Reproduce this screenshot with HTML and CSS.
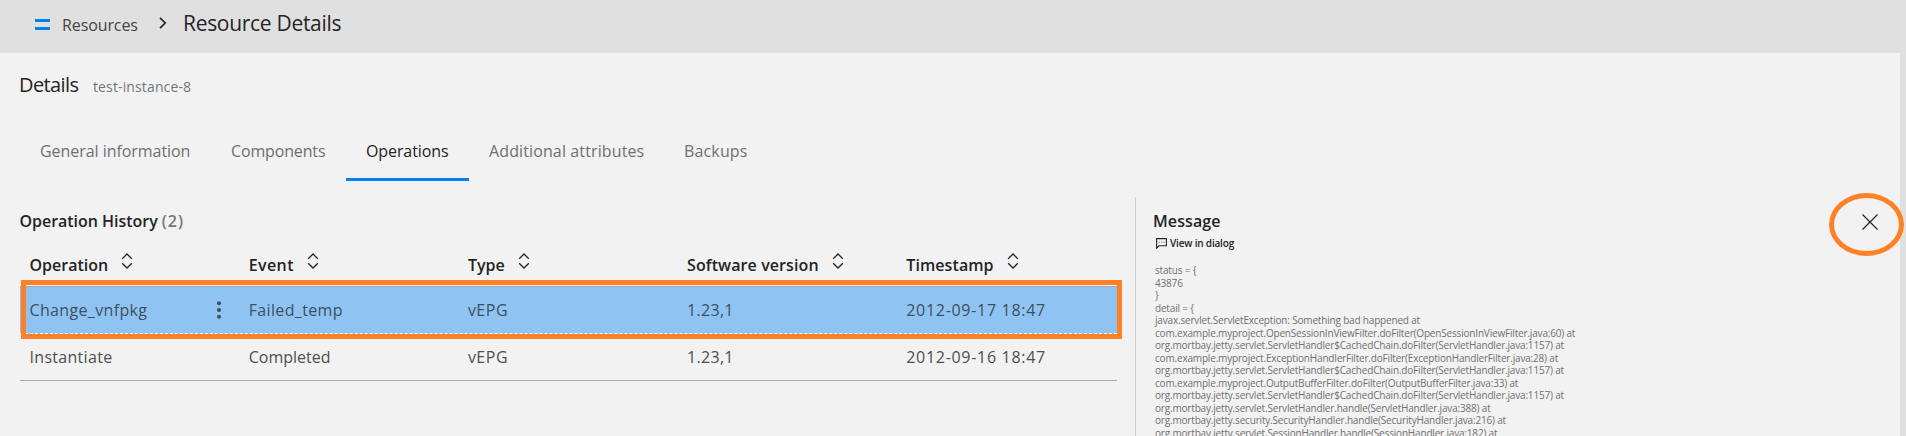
FILE: index.html
```
<!DOCTYPE html>
<html lang="en">
<head>
<meta charset="utf-8">
<title>Resource Details</title>
<link rel="stylesheet" href="styles.css">
</head>
<body>
<svg class="defs" aria-hidden="true">
  <symbol id="sort" viewBox="0 0 12 16"><path d="M1.2 5.8 6 1l4.8 4.8M1.2 10.2 6 15l4.8-4.8"/></symbol>
</svg>
<header class="bar">
  <span class="menu"></span>
  <a class="crumb">Resources</a>
  <svg class="chevron" viewBox="0 0 8 12"><path d="M1 .8 6.2 6 1 11.2"/></svg>
  <h1 class="title">Resource Details</h1>
</header>
<main class="page">
  <div class="heading"><h2 class="details">Details</h2><span class="instance">test-instance-8</span></div>
  <nav class="tabs">
    <a class="tab general">General information</a>
    <a class="tab components">Components</a>
    <a class="tab active">Operations</a>
    <a class="tab additional">Additional attributes</a>
    <a class="tab backups">Backups</a>
  </nav>
  <div class="content">
    <section class="history">
      <h3 class="section-title">Operation History <span class="count">(2)</span></h3>
      <div class="row head">
        <div class="cell">Operation<svg class="sort"><use href="#sort"/></svg></div>
        <div class="cell event">Event<svg class="sort"><use href="#sort"/></svg></div>
        <div class="cell">Type<svg class="sort"><use href="#sort"/></svg></div>
        <div class="cell software">Software version<svg class="sort"><use href="#sort"/></svg></div>
        <div class="cell software">Timestamp<svg class="sort"><use href="#sort"/></svg></div>
      </div>
      <div class="row selected">
        <div class="cell operation"><span class="change">Change_vnfpkg</span><svg class="kebab" viewBox="0 0 4 18"><circle cx="2" cy="2.2" r="2"/><circle cx="2" cy="9" r="2"/><circle cx="2" cy="15.8" r="2"/></svg></div>
        <div class="cell failed">Failed_temp</div>
        <div class="cell type">vEPG</div>
        <div class="cell version">1.23,1</div>
        <div class="cell time">2012-09-17 18:47</div>
        <span class="row-mark"></span>
      </div>
      <div class="row last">
        <div class="cell instantiate">Instantiate</div>
        <div class="cell">Completed</div>
        <div class="cell type">vEPG</div>
        <div class="cell version">1.23,1</div>
        <div class="cell time">2012-09-16 18:47</div>
      </div>
    </section>
    <aside class="message">
      <div class="message-head">
        <h3 class="section-title message-title">Message</h3>
        <span class="close"><svg class="cross" viewBox="0 0 16 16"><path d="M.5.5l15 15M15.5.5l-15 15"/></svg><span class="close-mark"></span></span>
      </div>
      <div class="dialog-link">
        <svg class="bubble" viewBox="0 0 11 11"><path d="M.6 10.2V.6h9.8v7.2H3z"/><path class="dots" d="M2.5 4.2h1.2M5 4.2h1.2M7.4 4.2h1.2"/></svg>
        <span>View in dialog</span>
      </div>
      <pre class="trace">status = {
43876
}
detail = {
javax.servlet.ServletException: Something bad happened at
com.example.myproject.OpenSessionInViewFilter.doFilter(OpenSessionInViewFilter.java:60) at
org.mortbay.jetty.servlet.ServletHandler$CachedChain.doFilter(ServletHandler.java:1157) at
com.example.myproject.ExceptionHandlerFilter.doFilter(ExceptionHandlerFilter.java:28) at
org.mortbay.jetty.servlet.ServletHandler$CachedChain.doFilter(ServletHandler.java:1157) at
com.example.myproject.OutputBufferFilter.doFilter(OutputBufferFilter.java:33) at
org.mortbay.jetty.servlet.ServletHandler$CachedChain.doFilter(ServletHandler.java:1157) at
org.mortbay.jetty.servlet.ServletHandler.handle(ServletHandler.java:388) at
org.mortbay.jetty.security.SecurityHandler.handle(SecurityHandler.java:216) at
org.mortbay.jetty.servlet.SessionHandler.handle(SessionHandler.java:182) at</pre>
    </aside>
  </div>
</main>
</body>
</html>
```
FILE: styles.css
```
* { box-sizing: border-box; }
body {
  margin: 0;
  height: 436px;
  overflow: hidden;
  display: flex;
  flex-direction: column;
  background: #e0e0e0;
  color: #242424;
  font: 400 16px/24px "Open Sans", "Noto Sans", sans-serif;
}
h1, h2, h3, pre { margin: 0; font: inherit; }
svg { fill: none; stroke: #242424; flex: none; }
.defs { position: absolute; width: 0; height: 0; }

.bar { height: 53px; flex: none; display: flex; align-items: flex-start; padding-left: 35px; }
.menu { width: 15px; height: 11px; margin: 19px 12px 0 0; border: solid #0082f0; border-width: 3px 0; }
.crumb { width: 75px; margin-top: 13px; letter-spacing: -0.1px; color: #444; }
.chevron { width: 8px; height: 12px; margin: 17px 0 0 22px; stroke-width: 1.7; }
.title { margin: 11px 0 0 16px; font-size: 21px; letter-spacing: -0.3px; white-space: nowrap; }

.page { flex: 1; min-height: 0; margin-right: 6px; background: #f2f2f2; display: flex; flex-direction: column; }
.heading { display: flex; align-items: baseline; height: 72px; padding: 20px 0 0 19px; }
.details { width: 60px; font-size: 20px; letter-spacing: -0.6px; }
.instance { margin-left: 14px; font-size: 14px; letter-spacing: 0.13px; color: #767676; }

.tabs { display: flex; height: 56px; padding-left: 20px; color: #6f6f6f; white-space: nowrap; }
.tab { height: 56px; padding: 14px 20px 0; }
.general { width: 191px; letter-spacing: -0.05px; }
.components { width: 135px; letter-spacing: -0.15px; }
.active { width: 123px; letter-spacing: -0.1px; color: #242424; border-bottom: 3px solid #0082f0; }
.additional { width: 195px; letter-spacing: 0.12px; }
.backups { letter-spacing: 0.15px; }

.content { flex: 1; min-height: 0; display: flex; }
.history { width: 1097px; margin: 28px 18px 0 20px; flex: none; }
.section-title { margin-left: -0.5px; font-weight: 600; letter-spacing: -0.03px; }
.count { color: #767676; letter-spacing: 1px; }
.row { position: relative; display: grid; grid-template-columns: repeat(5, 219.2px); line-height: 46px; color: #4f4f4f; }
.cell { padding-left: 9.5px; display: flex; white-space: nowrap; }
.head { height: 53px; padding-top: 20px; line-height: 24px; font-weight: 600; color: #242424; }
.sort { width: 12px; height: 16px; margin: 0 0 0 13px; stroke-width: 1.3; }
.event { letter-spacing: 0.4px; }
.software { letter-spacing: 0.09px; }
.selected { height: 48px; border-top: 1px solid #a8a8a8; border-bottom: 1px dashed #f2f2f2; background: #8fc4f2; color: #3d4f5f; }
.operation { justify-content: space-between; padding-right: 18px; }
.change { letter-spacing: 0.35px; }
.failed { letter-spacing: 0.35px; }
.instantiate { letter-spacing: 0.3px; }
.type { letter-spacing: 0.5px; }
.kebab { width: 4px; height: 18px; margin-top: 14px; fill: #3d4f5f; stroke: none; }
.version { letter-spacing: 0.3px; }
.time { letter-spacing: 0.7px; }
.row-mark { position: absolute; left: 1px; top: -7px; width: 1101px; height: 59px; border: 5px solid #ff8127; }
.last { height: 47px; border-bottom: 1px solid #a8a8a8; }

.message { flex: 1; min-width: 0; margin-top: 16px; padding: 12px 22px 0 17px; border-left: 1px solid #cfcfcf; }
.message-head { display: flex; justify-content: space-between; height: 24px; }
.message-title { margin-left: 0; letter-spacing: 0.1px; }
.close { position: relative; width: 16px; height: 16px; margin-top: 5px; }
.cross { display: block; width: 16px; height: 16px; stroke-width: 1.2; }
.close-mark { position: absolute; left: -33px; top: -21px; width: 75px; height: 63px; border: 5px solid #ff8127; border-radius: 50%; }
.dialog-link { display: flex; gap: 3px; margin: 3px 0 0 3px; font-size: 10px; line-height: 14px; font-weight: 600; letter-spacing: -0.18px; }
.bubble { width: 11px; height: 11px; margin-top: 2px; stroke-width: 1.1; }
.dots { stroke-width: 0.9; stroke: #666; }
.trace { margin: 14px 0 0 2px; font-size: 10px; line-height: 12.5px; letter-spacing: -0.18px; color: #707070; }
```
